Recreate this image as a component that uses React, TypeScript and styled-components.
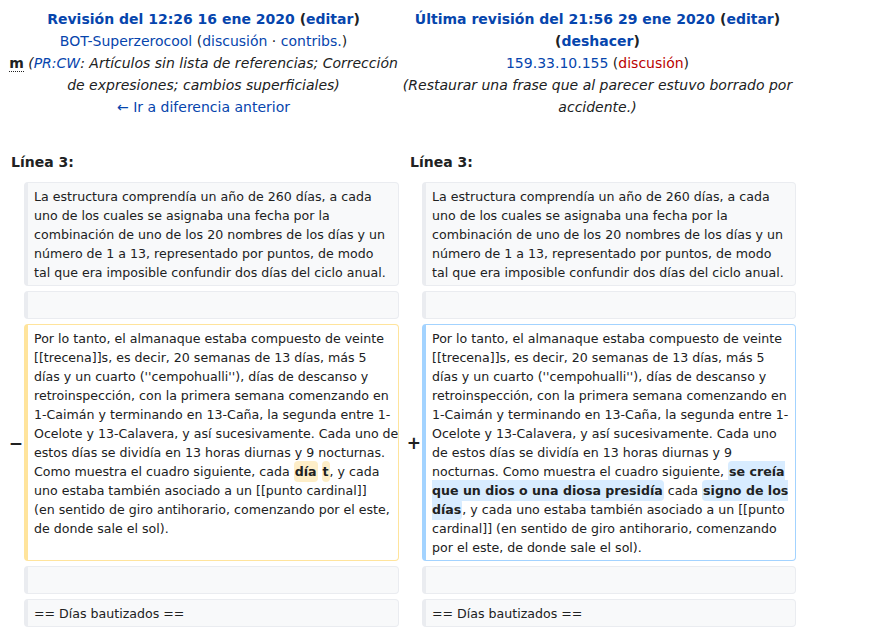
import React from "react";
import styled, { createGlobalStyle } from "styled-components";

const Global = createGlobalStyle`
  html, body { margin: 0; padding: 0; background: #ffffff; }
  body {
    margin: 8px;
    font-family: "DejaVu Sans", sans-serif;
    color: #202122;
  }
`;

const Diff = styled.div`
  display: grid;
  grid-template-columns: 16px 375px 23px 374px;
  row-gap: 5px;
  align-items: stretch;
`;

const Title = styled.div<{ $side: "o" | "n" }>`
  grid-column: ${(p) => (p.$side === "o" ? "1 / 3" : "3 / 5")};
  text-align: center;
  font-size: 14px;
  line-height: 22px;
  margin-bottom: 30px;
`;

const TitleLine = styled.div``;

const Strong = styled.strong`
  font-weight: bold;
`;

const Link = styled.a<{ $red?: boolean }>`
  color: ${(p) => (p.$red ? "#ba0000" : "#0645ad")};
  text-decoration: none;
`;

const Minor = styled.abbr`
  font-weight: bold;
  text-decoration: none;
  border-bottom: 1px dotted #202122;
  font-style: normal;
`;

const Comment = styled.span`
  font-style: italic;
`;

const LineNo = styled.div<{ $side: "o" | "n" }>`
  grid-column: ${(p) => (p.$side === "o" ? "1 / 3" : "3 / 5")};
  font-weight: bold;
  font-size: 14px;
  line-height: 19px;
  padding-left: ${(p) => (p.$side === "o" ? "3px" : "11px")};
  margin-bottom: 5px;
`;

const Marker = styled.div`
  display: flex;
  align-items: center;
  justify-content: flex-end;
  padding-right: 1px;
  font-weight: bold;
  font-size: 17px;
  color: #202122;
`;

const Cell = styled.div<{ $kind: "ctx" | "del" | "add" }>`
  box-sizing: border-box;
  border-style: solid;
  border-width: 1px 1px 1px 4px;
  border-radius: 4px;
  border-color: ${(p) =>
    p.$kind === "del" ? "#ffe49c" : p.$kind === "add" ? "#a3d3ff" : "#eaecf0"};
  background: ${(p) => (p.$kind === "ctx" ? "#f8f9fa" : "#ffffff")};
  padding: 3.5px 0;
  font-size: 12.6px;
  line-height: 19px;
  min-height: 28px;
  overflow: hidden;
`;

const CellText = styled.div`
  padding: 0 0 0 6px;
  white-space: pre;
`;

const Change = styled.span<{ $kind: "del" | "add" }>`
  font-weight: bold;
  background: ${(p) => (p.$kind === "del" ? "#feeec8" : "#d8ecff")};
  border-radius: 4px;
  padding: 3px 1px;
`;

const ctx1 = [
  "La estructura comprendía un año de 260 días, a cada",
  "uno de los cuales se asignaba una fecha por la",
  "combinación de uno de los 20 nombres de los días y un",
  "número de 1 a 13, representado por puntos, de modo",
  "tal que era imposible confundir dos días del ciclo anual.",
].join("\n");

const delHead = [
  "Por lo tanto, el almanaque estaba compuesto de veinte",
  "[[trecena]]s, es decir, 20 semanas de 13 días, más 5",
  "días y un cuarto (''cempohualli''), días de descanso y",
  "retroinspección, con la primera semana comenzando en",
  "1-Caimán y terminando en 13-Caña, la segunda entre 1-",
  "Ocelote y 13-Calavera, y así sucesivamente. Cada uno de",
  "estos días se dividía en 13 horas diurnas y 9 nocturnas.",
  "Como muestra el cuadro siguiente, cada ",
].join("\n");

const delTail = [
  ", y cada",
  "uno estaba también asociado a un [[punto cardinal]]",
  "(en sentido de giro antihorario, comenzando por el este,",
  "de donde sale el sol).",
].join("\n");

const addHead = [
  "Por lo tanto, el almanaque estaba compuesto de veinte",
  "[[trecena]]s, es decir, 20 semanas de 13 días, más 5",
  "días y un cuarto (''cempohualli''), días de descanso y",
  "retroinspección, con la primera semana comenzando en",
  "1-Caimán y terminando en 13-Caña, la segunda entre 1-",
  "Ocelote y 13-Calavera, y así sucesivamente. Cada uno",
  "de estos días se dividía en 13 horas diurnas y 9",
  "nocturnas. Como muestra el cuadro siguiente, ",
].join("\n");

const addTail = [
  ", y cada uno estaba también asociado a un [[punto",
  "cardinal]] (en sentido de giro antihorario, comenzando",
  "por el este, de donde sale el sol).",
].join("\n");

const heading = "== Días bautizados ==";

export default function App() {
  return (
    <>
      <Global />
      <Diff>
        <Title $side="o">
          <TitleLine>
            <Strong>
              <Link>Revisión del 12:26 16 ene 2020</Link> (<Link>editar</Link>)
            </Strong>
          </TitleLine>
          <TitleLine>
            <Link>BOT-Superzerocool</Link> (<Link>discusión</Link> ·{" "}
            <Link>contribs.</Link>)
          </TitleLine>
          <TitleLine>
            <Minor title="edición menor">m</Minor>{" "}
            <Comment>
              (<Link>PR:CW</Link>: Artículos sin lista de referencias; Corrección de
              expresiones; cambios superficiales)
            </Comment>
          </TitleLine>
          <TitleLine>
            <Link>← Ir a diferencia anterior</Link>
          </TitleLine>
        </Title>
        <Title $side="n">
          <TitleLine>
            <Strong>
              <Link>Última revisión del 21:56 29 ene 2020</Link> (<Link>editar</Link>)
            </Strong>
          </TitleLine>
          <TitleLine>
            <Strong>
              (<Link>deshacer</Link>)
            </Strong>
          </TitleLine>
          <TitleLine>
            <Link>159.33.10.155</Link> (<Link $red>discusión</Link>)
          </TitleLine>
          <TitleLine>
            <Comment>
              (Restaurar una frase que al parecer estuvo borrado por accidente.)
            </Comment>
          </TitleLine>
        </Title>

        <LineNo $side="o">Línea 3:</LineNo>
        <LineNo $side="n">Línea 3:</LineNo>

        <Marker />
        <Cell $kind="ctx">
          <CellText>{ctx1}</CellText>
        </Cell>
        <Marker />
        <Cell $kind="ctx">
          <CellText>{ctx1}</CellText>
        </Cell>

        <Marker />
        <Cell $kind="ctx">
          <CellText />
        </Cell>
        <Marker />
        <Cell $kind="ctx">
          <CellText />
        </Cell>

        <Marker>−</Marker>
        <Cell $kind="del">
          <CellText>
            {delHead}
            <Change $kind="del">día</Change>
            {" "}
            <Change $kind="del">t</Change>
            {delTail}
          </CellText>
        </Cell>
        <Marker>+</Marker>
        <Cell $kind="add">
          <CellText>
            {addHead}
            <Change $kind="add">{"se creía\nque un dios o una diosa presidía"}</Change>
            {" cada "}
            <Change $kind="add">{"signo de los\ndías"}</Change>
            {addTail}
          </CellText>
        </Cell>

        <Marker />
        <Cell $kind="ctx">
          <CellText />
        </Cell>
        <Marker />
        <Cell $kind="ctx">
          <CellText />
        </Cell>

        <Marker />
        <Cell $kind="ctx">
          <CellText>{heading}</CellText>
        </Cell>
        <Marker />
        <Cell $kind="ctx">
          <CellText>{heading}</CellText>
        </Cell>
      </Diff>
    </>
  );
}
